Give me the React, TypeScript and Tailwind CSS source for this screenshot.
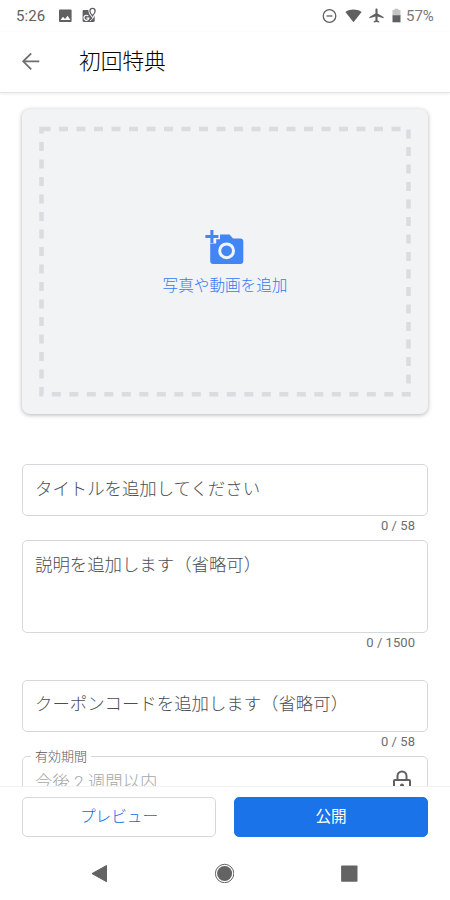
import type { ReactNode } from 'react'

function StatusBar() {
  return (
    <div className="flex h-8 shrink-0 items-center pl-4 pr-[15px] text-[15px] text-[#5f6062]">
      <span className="w-[30px] tracking-[0.1px]">5:26</span>
      <svg className="ml-3 mt-[-1px] size-[15px]" viewBox="0 0 15 15">
        <rect x="1" y="1.5" width="12.6" height="12.5" rx="1" fill="#5f6062" />
        <path d="M2.5 12 5 8.7l2 2.2 2.600-3.200 2.800 4.300z" fill="#fff" />
      </svg>
      <svg className="ml-[8px] mt-[-2px] size-4" viewBox="0 0 16 16">
        <path d="M2.800 3h5.500c.2 3 1.800 5.200 3 7l2.400-1.200v4.900c0 .7-.4 1.200-1.200 1.200H2.800c-.8 0-1.200-.5-1.200-1.200V4.200c0-.8.4-1.200 1.200-1.200z" fill="#5f6062" />
        <path d="M7.300 9.100A2.500 2.500 0 1 0 7.900 11.200H5.500" fill="none" stroke="#fff" strokeWidth="1.200" />
        <path d="m9 14 4.700-4.500" stroke="#fff" strokeWidth=".8" />
        <path d="M11.500 1.300a2.600 2.600 0 0 1 2.600 2.600c0 1.900-2.600 5-2.600 5s-2.600-3.100-2.600-5a2.600 2.600 0 0 1 2.600-2.600z" fill="#fff" stroke="#fff" strokeWidth="3" />
        <path d="M11.500 1.300a2.600 2.600 0 0 1 2.600 2.600c0 1.900-2.600 5-2.600 5s-2.600-3.100-2.600-5a2.600 2.600 0 0 1 2.600-2.600z" fill="#fff" stroke="#5f6062" strokeWidth="1.300" />
      </svg>
      <div className="flex-1" />
      <svg className="size-[15px]" viewBox="0 0 15 15" fill="none" stroke="#5f6062" strokeWidth="1.300">
        <circle cx="7.500" cy="7" r="6.300" />
        <path d="M4.500 7h6" />
      </svg>
      <svg className="ml-2 h-[15px] w-[17px]" viewBox="0 0 17 15">
        <path d="M.4 3C5.400-.2 11.600-.2 16.600 3L8.500 13.300z" fill="#5f6062" />
      </svg>
      <svg className="ml-[6px] mt-[-1px] size-[17px]" viewBox="0 0 24 24">
        <path d="M22 16v-2l-8.500-5V3.500C13.500 2.700 12.800 2 12 2s-1.500.7-1.500 1.500V9L2 14v2l8.500-2.500V19L8 20.500V22l4-1 4 1v-1.500L13.500 19v-5.500z" fill="#5f6062" />
      </svg>
      <svg className="ml-[7px] mt-[-1px] h-[15px] w-[9px]" viewBox="0 0 9 15">
        <path d="M2.500.8h4v1.300h2V8h-8V2.100h2z" fill="#c3c4c5" />
        <path d="M.5 7.300h8v7h-8z" fill="#5f6062" />
      </svg>
      <span className="ml-[5px] w-[29px] whitespace-nowrap text-[#77787a]">57%</span>
    </div>
  )
}

function AddMediaCard() {
  return (
    <div className="relative h-[305px] shrink-0 rounded-lg bg-[#f1f3f4] shadow-[0_1px_4px_rgba(60,64,67,0.4)]">
      <svg className="absolute inset-0 size-full" viewBox="0 0 406 305" fill="none">
        <path d="M19.500 20H386.500V285.300H19.500z" stroke="#dadce0" strokeWidth="4.500" strokeDasharray="9 8.500" />
      </svg>
      <div className="flex h-full flex-col items-center pt-[119px]">
        <svg className="h-9 w-10" viewBox="0 0 40 36">
          <path
            d="M15 6.500h9.500l3.500 4h7.300a3 3 0 0 1 3 3v19.400a3 3 0 0 1-3 3H8.200a3 3 0 0 1-3-3V15.500h6v-4.300h3.800z"
            fill="#4285f4"
          />
          <circle cx="21.600" cy="22.800" r="6.900" fill="none" stroke="#f1f3f4" strokeWidth="3" />
          <path d="M6.900 1.900v13M.4 8.400h13" stroke="#4285f4" strokeWidth="3" />
        </svg>
        <span className="mt-[10px] text-[15.600px] font-light leading-6 text-[#3578f2]">写真や動画を追加</span>
      </div>
    </div>
  )
}

function Field({ label, count, className }: { label: string; count: string; className: string }) {
  return (
    <div className="shrink-0">
      <div className={`rounded-[5px] border border-[#d6d8dc] px-3 text-[17.400px] font-light leading-[26px] text-[#4a4e53] ${className}`}>
        {label}
      </div>
      <div className="pr-[13px] pt-px text-right text-[13px] leading-[18px] tracking-[0.05px] text-[#6b6e72]">{count}</div>
    </div>
  )
}

function PeriodField() {
  return (
    <fieldset className="h-[70px] shrink-0 rounded-[5px] border border-[#d6d8dc] pl-2 pr-[15px]">
      <legend className="px-[4px] pt-px text-[13px] font-light leading-[19px] text-[#55585c]">有効期間</legend>
      <div className="flex justify-between">
        <span className="pl-[4px] text-[17.400px] font-light leading-[32px] text-[#a5a7aa]">今後 2 週間以内</span>
        <svg className="mt-[4px] h-6 w-5" viewBox="0 0 20 24" fill="none" stroke="#5f6062" strokeWidth="2">
          <rect x="2" y="10" width="16" height="12.500" rx="1" />
          <path d="M5.500 10V6a4.500 4.500 0 0 1 9 0v4" />
          <circle cx="10" cy="15.500" r="1" />
        </svg>
      </div>
    </fieldset>
  )
}

function FooterButton({ className, children }: { className: string; children: ReactNode }) {
  return (
    <button className={`h-10 flex-1 rounded-[5px] border pt-px text-[15.600px] ${className}`}>
      {children}
    </button>
  )
}

export default function App() {
  return (
    <div className="flex h-[900px] w-[450px] flex-col overflow-hidden bg-white font-['Roboto','Noto_Sans_CJK_JP',sans-serif]">
      <StatusBar />

      <header className="flex h-[61px] shrink-0 items-center border-b border-[#e4e4e4] pl-[21px] shadow-[0_1px_3px_rgba(0,0,0,0.08)]">
        <svg className="mt-[-2px] size-5" viewBox="0 0 20 20" fill="none" stroke="#6f6f6f" strokeWidth="1.800">
          <path d="M18.300 10.300H2.500M10.200 2.300l-8 8 8 8" />
        </svg>
        <h1 className="ml-[38px] text-[21.700px] font-light text-black">初回特典</h1>
      </header>

      {/* Form */}
      <main className="flex min-h-0 flex-1 flex-col overflow-hidden px-[22px] pt-4">
        <AddMediaCard />
        <div className="h-[50px] shrink-0" />
        <Field label="タイトルを追加してください" count="0 / 58" className="h-[52px] pt-[11px]" />
        <div className="h-[5px] shrink-0" />
        <Field label="説明を追加します（省略可）" count="0 / 1500" className="h-[93px] pt-[11px]" />
        <div className="h-[28px] shrink-0" />
        <Field label="クーポンコードを追加します（省略可）" count="0 / 58" className="h-[52px] pt-[10px]" />
        <div className="mt-[-5px]">
          <PeriodField />
        </div>
      </main>

      <footer className="flex h-[61px] shrink-0 gap-[18px] border-t border-[#f1f1f1] px-[22px] pt-[10px]">
        <FooterButton className="border-[#d6d8dc] font-light text-[#0f68e6]">プレビュー</FooterButton>
        <FooterButton className="border-[#1a73e8] bg-[#1a73e8] text-white">公開</FooterButton>
      </footer>

      {/* Android navigation */}
      <nav className="flex h-[53px] shrink-0 items-start justify-between pl-[89px] pr-[91px] pt-[16px]">
        <svg className="size-5" viewBox="0 0 20 20">
          <path d="M3 10.600 17.500 2.500v16.200z" fill="#636363" stroke="#636363" strokeLinejoin="round" />
        </svg>
        <svg className="size-5" viewBox="0 0 20 20">
          <circle cx="10.600" cy="10.500" r="9.200" fill="none" stroke="#636363" />
          <circle cx="10.600" cy="10.500" r="7.500" fill="#636363" />
        </svg>
        <svg className="size-5" viewBox="0 0 20 20">
          <rect x="2.100" y="2.500" width="16.400" height="16.300" rx=".8" fill="#636363" />
        </svg>
      </nav>
    </div>
  )
}
